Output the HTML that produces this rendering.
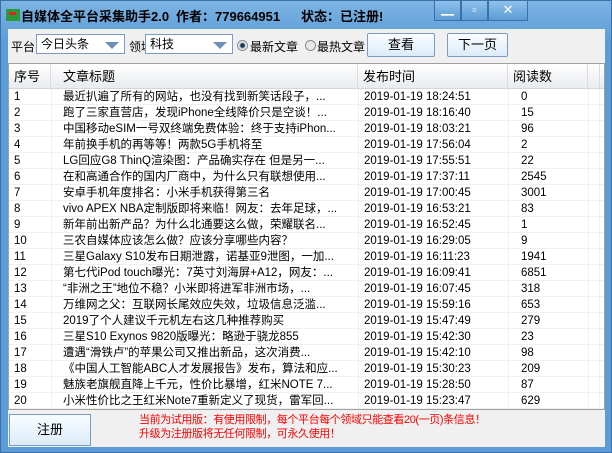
<!DOCTYPE html>
<html><head><meta charset="utf-8"><style>
*{margin:0;padding:0;box-sizing:border-box}
body{width:612px;height:453px;overflow:hidden;font-family:"Liberation Sans","Noto Sans CJK SC",sans-serif;font-size:12px;background:#4f8fcc;position:relative}
.win{position:absolute;left:0;top:0;width:612px;height:453px;background:linear-gradient(#7db4e3,#5c9cd6 40px,#5c9cd6);border:1px solid #3a6fa8}
.title{position:absolute;top:5px;font-size:13px;font-weight:bold;color:#000;white-space:nowrap}
.icon{position:absolute;left:5px;top:8px;width:14px;height:12px;background:#2c9a3c}
.icon:after{content:"";position:absolute;left:3px;top:3px;width:7px;height:3px;background:#d22}
.wbtn{position:absolute;top:0;height:20px;border:1px solid #3a6fa8;border-top:none;background:linear-gradient(#8ec2ec,#5c9cd6);color:#fff;text-align:center;font-size:13px;line-height:18px}
.client{position:absolute;left:7px;top:28px;width:597px;height:418px;background:#f0f0f0}
.lbl{position:absolute;font-size:12px;white-space:nowrap;line-height:16px}
.combo{position:absolute;top:5px;height:20px;border:1px solid #7a9cc2;background:#fff;font-size:12px;padding-left:4px;line-height:18px;white-space:nowrap}
.combo i{position:absolute;right:5px;top:7px;border-left:7px solid transparent;border-right:7px solid transparent;border-top:7px solid #6d8fb8}
.radio{position:absolute;top:11px;width:11px;height:11px;border-radius:50%;border:1px solid #8a8a8a;background:#fff}
.btn{position:absolute;border:1px solid #7a9cc2;background:linear-gradient(#fafdff,#dcebf9);text-align:center;font-size:13px;border-radius:2px}
.list{position:absolute;left:0;top:34px;width:597px;height:347px;background:#fff;border:1px solid #a0a0a0;overflow:hidden}
.row{position:absolute;left:0;height:16px;width:600px;border-bottom:1px solid #f0f0f0;font-size:11.5px;line-height:16px;white-space:nowrap}
.row span{position:absolute;top:0;overflow:hidden}
.hdr{position:absolute;left:0;top:0;height:25px;width:600px;background:linear-gradient(#fff,#e8ebef);border-bottom:1px solid #d5d5d5;font-size:13px;line-height:25px}
.hdr span{position:absolute;top:0;height:25px;border-right:1px solid #dcdcdc}
.hdr b{position:absolute;top:0;font-weight:normal;white-space:nowrap}
.vl{position:absolute;top:25px;bottom:0;width:1px;background:#f0f0f0}
.warn{position:absolute;left:131px;top:384px;color:#f00;font-size:11px;letter-spacing:-0.4px;line-height:14px;white-space:nowrap}
</style></head><body>
<div class="win">
<div class="icon"></div>
<div class="title" style="left:20px">自媒体全平台采集助手2.0</div>
<div class="title" style="left:175px">作者：779664951</div>
<div class="title" style="left:300px">状态：已注册!</div>
<div class="wbtn" style="left:433px;width:27px">▁</div>
<div class="wbtn" style="left:460px;width:27px">▫</div>
<div class="wbtn" style="left:487px;width:40px">✕</div>
<div class="client">
<div class="lbl" style="left:3px;top:10px">平台</div>
<div class="combo" style="left:28px;width:89px">今日头条<i></i></div>
<div class="lbl" style="left:113px;top:35px;font-size:16px">↖</div>
<div class="lbl" style="left:121px;top:10px">领域</div>
<div class="combo" style="left:137px;width:88px">科技<i></i></div>
<div class="radio" style="left:229px;background:radial-gradient(#234 30%,#9bd 40%,#fff 70%)"></div>
<div class="lbl" style="left:242px;top:10px">最新文章</div>
<div class="radio" style="left:297px;background:#e8e8e8"></div>
<div class="lbl" style="left:309px;top:10px">最热文章</div>
<div class="btn" style="left:359px;top:4px;width:68px;height:24px;line-height:22px">查看</div>
<div class="btn" style="left:439px;top:4px;width:61px;height:24px;line-height:22px">下一页</div>
<div class="list">
<div class="hdr"><span style="left:0;width:42px"></span><span style="left:42px;width:307px"></span><span style="left:349px;width:150px"></span><span style="left:499px;width:80px"></span><span style="left:579px;width:12px"></span>
<b style="left:5px">序号</b><b style="left:54px">文章标题</b><b style="left:354px">发布时间</b><b style="left:504px">阅读数</b></div>
<div class="vl" style="left:42px"></div><div class="vl" style="left:349px"></div><div class="vl" style="left:499px"></div><div class="vl" style="left:579px"></div><div class="vl" style="left:590px"></div>
<div class="row" style="top:25px"><span style="left:5px">1</span><span style="left:54px">最近扒遍了所有的网站，也没有找到新笑话段子，...</span><span style="left:355px">2019-01-19 18:24:51</span><span style="left:512px">0</span></div>
<div class="row" style="top:41px"><span style="left:5px">2</span><span style="left:54px">跑了三家直营店，发现iPhone全线降价只是空谈！...</span><span style="left:355px">2019-01-19 18:16:40</span><span style="left:512px">15</span></div>
<div class="row" style="top:57px"><span style="left:5px">3</span><span style="left:54px">中国移动eSIM一号双终端免费体验：终于支持iPhon...</span><span style="left:355px">2019-01-19 18:03:21</span><span style="left:512px">96</span></div>
<div class="row" style="top:73px"><span style="left:5px">4</span><span style="left:54px">年前换手机的再等等！两款5G手机将至</span><span style="left:355px">2019-01-19 17:56:04</span><span style="left:512px">2</span></div>
<div class="row" style="top:89px"><span style="left:5px">5</span><span style="left:54px">LG回应G8 ThinQ渲染图：产品确实存在 但是另一...</span><span style="left:355px">2019-01-19 17:55:51</span><span style="left:512px">22</span></div>
<div class="row" style="top:105px"><span style="left:5px">6</span><span style="left:54px">在和高通合作的国内厂商中，为什么只有联想使用...</span><span style="left:355px">2019-01-19 17:37:11</span><span style="left:512px">2545</span></div>
<div class="row" style="top:121px"><span style="left:5px">7</span><span style="left:54px">安卓手机年度排名：小米手机获得第三名</span><span style="left:355px">2019-01-19 17:00:45</span><span style="left:512px">3001</span></div>
<div class="row" style="top:137px"><span style="left:5px">8</span><span style="left:54px">vivo APEX NBA定制版即将来临！网友：去年足球，...</span><span style="left:355px">2019-01-19 16:53:21</span><span style="left:512px">83</span></div>
<div class="row" style="top:153px"><span style="left:5px">9</span><span style="left:54px">新年前出新产品？为什么北通要这么做，荣耀联名...</span><span style="left:355px">2019-01-19 16:52:45</span><span style="left:512px">1</span></div>
<div class="row" style="top:169px"><span style="left:5px">10</span><span style="left:54px">三农自媒体应该怎么做？应该分享哪些内容？</span><span style="left:355px">2019-01-19 16:29:05</span><span style="left:512px">9</span></div>
<div class="row" style="top:185px"><span style="left:5px">11</span><span style="left:54px">三星Galaxy S10发布日期泄露，诺基亚9泄图，一加...</span><span style="left:355px">2019-01-19 16:11:23</span><span style="left:512px">1941</span></div>
<div class="row" style="top:201px"><span style="left:5px">12</span><span style="left:54px">第七代iPod touch曝光：7英寸刘海屏+A12，网友：...</span><span style="left:355px">2019-01-19 16:09:41</span><span style="left:512px">6851</span></div>
<div class="row" style="top:217px"><span style="left:5px">13</span><span style="left:54px">“非洲之王”地位不稳？小米即将进军非洲市场，...</span><span style="left:355px">2019-01-19 16:07:45</span><span style="left:512px">318</span></div>
<div class="row" style="top:233px"><span style="left:5px">14</span><span style="left:54px">万维网之父：互联网长尾效应失效，垃圾信息泛滥...</span><span style="left:355px">2019-01-19 15:59:16</span><span style="left:512px">653</span></div>
<div class="row" style="top:249px"><span style="left:5px">15</span><span style="left:54px">2019了个人建议千元机左右这几种推荐购买</span><span style="left:355px">2019-01-19 15:47:49</span><span style="left:512px">279</span></div>
<div class="row" style="top:265px"><span style="left:5px">16</span><span style="left:54px">三星S10 Exynos 9820版曝光：略逊于骁龙855</span><span style="left:355px">2019-01-19 15:42:30</span><span style="left:512px">23</span></div>
<div class="row" style="top:281px"><span style="left:5px">17</span><span style="left:54px">遭遇“滑铁卢”的苹果公司又推出新品，这次消费...</span><span style="left:355px">2019-01-19 15:42:10</span><span style="left:512px">98</span></div>
<div class="row" style="top:297px"><span style="left:5px">18</span><span style="left:54px">《中国人工智能ABC人才发展报告》发布，算法和应...</span><span style="left:355px">2019-01-19 15:30:23</span><span style="left:512px">209</span></div>
<div class="row" style="top:313px"><span style="left:5px">19</span><span style="left:54px">魅族老旗舰直降上千元，性价比暴增，红米NOTE 7...</span><span style="left:355px">2019-01-19 15:28:50</span><span style="left:512px">87</span></div>
<div class="row" style="top:329px"><span style="left:5px">20</span><span style="left:54px">小米性价比之王红米Note7重新定义了现货，雷军回...</span><span style="left:355px">2019-01-19 15:23:47</span><span style="left:512px">629</span></div>
</div>
<div class="btn" style="left:1px;top:385px;width:82px;height:32px;line-height:30px;border-radius:0">注册</div>
<div class="warn">当前为试用版：有使用限制，每个平台每个领域只能查看20(一页)条信息！<br>升级为注册版将无任何限制，可永久使用！</div>
</div>
</div>
</body></html>
